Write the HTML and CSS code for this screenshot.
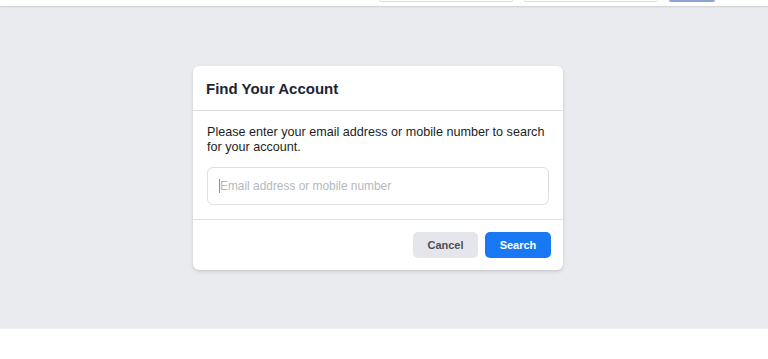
FILE: index.html
```html
<!DOCTYPE html>
<html lang="en">
<head>
<meta charset="utf-8">
<title>Find Your Account</title>
<link rel="stylesheet" href="styles.css">
</head>
<body>
<header class="topbar">
  <div class="top-field"></div>
  <div class="top-field"></div>
  <div class="top-button"></div>
</header>
<main class="main">
  <section class="card">
    <div class="card-header">Find Your Account</div>
    <div class="card-body">
      <p class="intro">Please enter your email address or mobile number to search for your account.</p>
      <div class="field">
        <span class="caret"></span>
        <input class="input" type="text" placeholder="Email address or mobile number">
      </div>
    </div>
    <div class="card-footer">
      <button class="btn btn-cancel" type="button">Cancel</button>
      <button class="btn btn-search" type="button">Search</button>
    </div>
  </section>
</main>
<footer class="page-footer"></footer>
</body>
</html>
```
FILE: styles.css
```css
* { box-sizing: border-box; }
html, body { margin: 0; padding: 0; }
body {
  font-family: "Liberation Sans", Arial, Helvetica, sans-serif;
  color: #1c1e21;
  background: #ffffff;
}
.topbar {
  position: relative;
  z-index: 2;
  height: 6px;
  background: #ffffff;
  box-shadow: 0 1px 2px rgba(0, 0, 0, 0.12);
  display: flex;
  justify-content: flex-end;
  align-items: flex-start;
  gap: 11px;
  padding-right: 53px;
}
.top-field {
  width: 134px;
  height: 2px;
  border: 1px solid #dddfe2;
  border-top: none;
  border-radius: 0 0 3px 3px;
}
.top-button {
  width: 46px;
  height: 2px;
  background: #8fa4d4;
  border-radius: 0 0 2px 2px;
}
.main {
  background: #e9ebee;
  height: 323px;
  padding: 60px 12px 0 0;
  border-bottom: 1px solid #eef0f3;
}
.card {
  width: 370px;
  margin: 0 auto;
  background: #ffffff;
  border-radius: 6px;
  box-shadow: 0 1px 2px rgba(0, 0, 0, 0.1), 0 2px 5px rgba(0, 0, 0, 0.08);
}
.card-header {
  height: 45px;
  display: flex;
  align-items: center;
  padding: 0 14px 0 13px;
  font-size: 15px;
  font-weight: bold;
  color: #1c2536;
  border-bottom: 1px solid #dddfe2;
}
.card-body {
  padding: 14px 14px 14px;
}
.intro {
  margin: 0 0 12px;
  font-size: 12.6px;
  line-height: 15px;
  color: #1c1e21;
}
.field {
  position: relative;
}
.caret {
  position: absolute;
  left: 12px;
  top: 12px;
  width: 1px;
  height: 14px;
  background: #8d949e;
}
.input {
  display: block;
  width: 100%;
  height: 38px;
  border: 1px solid #dddfe2;
  border-radius: 6px;
  padding: 0 11px 0 12px;
  font-family: inherit;
  font-size: 11.9px;
  color: #1c1e21;
  outline: none;
  background: #ffffff;
}
.input::placeholder { color: #b4b9c0; }
.card-footer {
  border-top: 1px solid #dddfe2;
  padding: 12px 12px 12px;
  display: flex;
  justify-content: flex-end;
  gap: 7px;
}
.btn {
  height: 26px;
  border: none;
  border-radius: 5px;
  font-family: inherit;
  font-size: 11px;
  font-weight: bold;
  padding: 0;
}
.btn-cancel {
  width: 65px;
  background: #e4e6eb;
  color: #4b4f56;
}
.btn-search {
  width: 66px;
  background: #1877f2;
  color: #ffffff;
}
.page-footer {
  height: 30px;
  background: #ffffff;
}
```
